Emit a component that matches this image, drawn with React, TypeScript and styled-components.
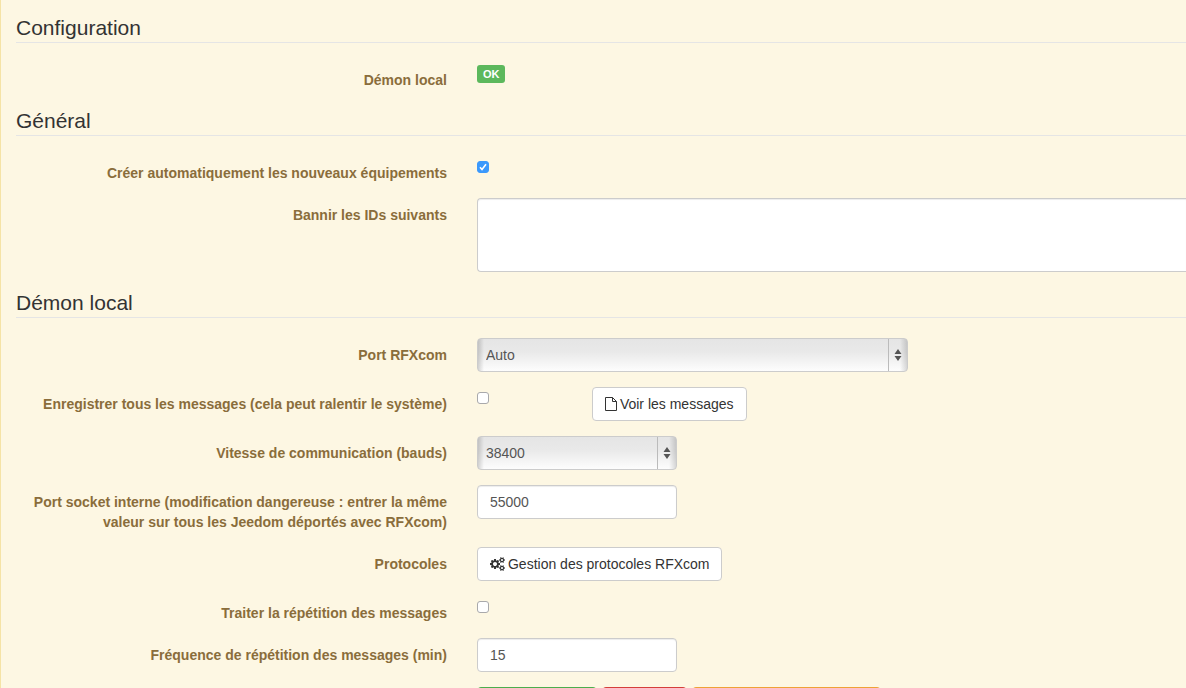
import React from "react";
import styled, { createGlobalStyle, css } from "styled-components";

const GlobalStyle = createGlobalStyle`
  *, *::before, *::after { box-sizing: border-box; }
  html { overflow: hidden; }
  body {
    margin: 0;
    background: #fdf7e3;
    color: #333;
    font-family: "Liberation Sans", Arial, sans-serif;
    font-size: 14px;
    line-height: 20px;
  }
  button, input, select, textarea { font: inherit; }
`;

const Panel = styled.form`
  min-height: 100vh;
  padding-top: 12px;
  border-left: 1px solid #f5e3a6;
  background: #fdf7e3;
`;

const Section = styled.section``;

const Legend = styled.h2`
  margin: 0 0 20px 15px;
  padding-top: 2px;
  border-bottom: 1px solid #e5e5e5;
  font-size: 21px;
  font-weight: 400;
  line-height: 28px;
`;

const Row = styled.div`
  display: flex;
  align-items: flex-start;
  margin-bottom: 15px;
`;

const labelStyle = css`
  flex: 0 0 38.9%;
  padding: 7px 15px 0;
  color: #8a6d3b;
  font-weight: 700;
  text-align: right;
`;

const Label = styled.label`
  ${labelStyle}
`;

const Caption = styled.span`
  ${labelStyle}
`;

const Column = styled.div<{ $width?: string; $flush?: boolean }>`
  flex: ${(p) => (p.$width ? `0 0 ${p.$width}` : "1 0 0")};
  min-width: 0;
  padding: ${(p) => (p.$flush ? "0 0 0 15px" : "0 15px")};
`;

const Badge = styled.span`
  display: block;
  width: fit-content;
  margin-top: 2px;
  padding: 2px 6px;
  border-radius: 3px;
  background: #5cb85c;
  color: #fff;
  font-size: 11px;
  font-weight: 700;
  line-height: 14px;
`;

const field = css`
  display: block;
  width: 100%;
  border: 1px solid #ccc;
  border-radius: 4px;
  color: #555;
`;

const TextInput = styled.input`
  ${field}
  height: 34px;
  padding: 6px 12px;
  background: #fff;
  box-shadow: inset 0 1px 1px rgba(0, 0, 0, 0.075);
`;

const TextArea = styled.textarea`
  ${field}
  height: 74px;
  padding: 6px 12px;
  border-right: 0;
  border-radius: 4px 0 0 4px;
  background: #fff;
  box-shadow: inset 0 1px 1px rgba(0, 0, 0, 0.075);
  resize: none;
`;

const SelectBox = styled.div`
  position: relative;
`;

const Select = styled.select`
  ${field}
  height: 34px;
  padding: 0 28px 0 8px;
  appearance: none;
  background:
    linear-gradient(to right, rgba(0, 0, 0, 0.16), transparent) left / 6px 100% no-repeat,
    linear-gradient(to left, rgba(0, 0, 0, 0.14), transparent) right / 7px 100% no-repeat,
    linear-gradient(#e5e5e5, #e9e9e9 40%, #fdfdfd);
`;

const SelectArrows = styled.svg`
  position: absolute;
  top: 1px;
  right: 0;
  pointer-events: none;
`;

const CheckboxBox = styled.div`
  display: grid;
  width: fit-content;
  padding-top: 5px;
`;

const Checkbox = styled.input`
  grid-area: 1 / 1;
  width: 12px;
  height: 12px;
  margin: 0;
  appearance: none;
  border: 1px solid #a9a9ab;
  border-radius: 3px;
  background: #fff;

  &:checked {
    border-color: #3b99fc;
    background: #3b99fc;
  }

  &:checked + svg {
    visibility: visible;
  }
`;

const Tick = styled.svg`
  grid-area: 1 / 1;
  z-index: 1;
  visibility: hidden;
  pointer-events: none;
`;

const Button = styled.button`
  display: inline-flex;
  align-items: center;
  gap: 3px;
  height: 34px;
  padding: 0 12px;
  border: 1px solid #ccc;
  border-radius: 4px;
  background: #fff;
  color: #333;
  white-space: nowrap;
`;

const Actions = styled.div`
  display: flex;
  gap: 5px;
  margin-left: 38.9%;
  padding: 0 15px;
`;

const tones = {
  success: { fill: "#5cb85c", edge: "#4cae4c", width: "120px" },
  danger: { fill: "#d9534f", edge: "#d43f3a", width: "85px" },
  warning: { fill: "#f0ad4e", edge: "#eea236", width: "189px" },
};

const ActionButton = styled(Button)<{ $tone: keyof typeof tones }>`
  width: ${(p) => tones[p.$tone].width};
  border-color: ${(p) => tones[p.$tone].edge};
  background: ${(p) => tones[p.$tone].fill};
`;

function Arrows() {
  return (
    <SelectArrows width="20" height="32" viewBox="0 0 20 32" aria-hidden="true">
      <path d="M.5 0v32" stroke="#bbb" />
      <path d="M6.500 15L10 10L13.500 15ZM6.500 17H13.500L10 22Z" fill="#555" />
    </SelectArrows>
  );
}

function FileIcon() {
  return (
    <svg width="12" height="14" viewBox="0 0 12 14" fill="none" stroke="#333" aria-hidden="true">
      <path d="M.5.5H7.500L11.500 4.500V13.500H.5ZM7.500.5V4.500H11.500" />
    </svg>
  );
}

const smallCog =
  "v140q0 16-149 31-12 27-30 52 51 113 51 138 0 4-4 7-122 71-124 71-8 0-46-47t-52-68q-20 2-30 2t-30-2q-14 21-52 68t-46 47q-2 0-124-71-4-3-4-7 0-25 51-138-18-25-30-52-149-15-149-31v-140q0-16 149-31 13-29 30-52-51-113-51-138 0-4 4-7 4-2 35-20t59-34 30-16q8 0 46 46.500t52 67.500q20-2 30-2t30 2q51-71 92-112l6-2q4 0 124 70 4 3 4 7 0 25-51 138 17 23 30 52 149 15 149 31z";

const smallHole =
  "q0-52-38-90t-90-38-90 38-38 90q0 53 37.500 90.500t90.500 37.500 90.500-37.500 37.500-90.500z";

const largeCog =
  "M896 896q0-106-75-181t-181-75-181 75-75 181 75 181 181 75 181-75 75-181zM1280 805v185q0 10-7 19.500t-16 10.500l-155 24q-11 35-32 76 34 48 90 115 7 11 7 20 0 12-7 19-23 30-82.500 89.500t-78.500 59.500q-11 0-21-7l-115-90q-37 19-77 31-11 108-23 155-7 24-30 24h-186q-11 0-20-7.500t-10-17.500l-23-153q-34-10-75-31l-118 89q-7 7-20 7-11 0-21-8-144-133-144-160 0-9 7-19 10-14 41-53t47-61q-23-44-35-82l-152-24q-10-1-17-9.500t-7-19.500v-185q0-10 7-19.500t16-10.500l155-24q11-35 32-76-34-48-90-115-7-11-7-20 0-12 7-20 22-30 82-89t79-59q11 0 21 7l115 90q34-18 77-32 11-108 23-154 7-24 30-24h186q11 0 20 7.500t10 17.500l23 153q34 10 75 31l118-89q8-7 20-7 11 0 21 8 144 133 144 160 0 8-7 19-12 16-42 54t-45 60q23 48 34 82l152 23q10 2 17 10.500t7 19.500z";

function CogsIcon() {
  return (
    <svg width="15" height="14" viewBox="0 0 1920 1792" fill="#333" aria-hidden="true">
      <path d={largeCog} />
      <path fillRule="evenodd" d={`M1920 1338${smallCog}M1664 1408${smallHole}`} />
      <path fillRule="evenodd" d={`M1920 314${smallCog}M1664 384${smallHole}`} />
    </svg>
  );
}

function Check({ id, defaultChecked }: { id: string; defaultChecked?: boolean }) {
  return (
    <CheckboxBox>
      <Checkbox type="checkbox" id={id} defaultChecked={defaultChecked} />
      <Tick width="12" height="12" viewBox="0 0 12 12" aria-hidden="true">
        <path d="M3 6.300L5 8.500L9 3.200" fill="none" stroke="#fff" strokeWidth="1.600" />
      </Tick>
    </CheckboxBox>
  );
}

export default function App() {
  return (
    <>
      <GlobalStyle />
      <Panel onSubmit={(e) => e.preventDefault()}>
        <Section>
          <Legend>Configuration</Legend>
          <Row>
            <Caption>Démon local</Caption>
            <Column><Badge>OK</Badge></Column>
          </Row>
        </Section>

        <Section>
          <Legend>Général</Legend>
          <Row>
            <Label htmlFor="auto-create">Créer automatiquement les nouveaux équipements</Label>
            <Column><Check id="auto-create" defaultChecked /></Column>
          </Row>
          <Row>
            <Label htmlFor="banned">Bannir les IDs suivants</Label>
            <Column $flush><TextArea id="banned" /></Column>
          </Row>
        </Section>

        <Section>
          <Legend>Démon local</Legend>
          <Row>
            <Label htmlFor="port">Port RFXcom</Label>
            <Column $width="38.9%">
              <SelectBox>
                <Select id="port"><option>Auto</option></Select>
                <Arrows />
              </SelectBox>
            </Column>
          </Row>
          <Row>
            <Label htmlFor="log">Enregistrer tous les messages (cela peut ralentir le système)</Label>
            <Column $width="9.7%"><Check id="log" /></Column>
            <Column><Button type="button"><FileIcon />Voir les messages</Button></Column>
          </Row>
          <Row>
            <Label htmlFor="speed">Vitesse de communication (bauds)</Label>
            <Column $width="19.45%">
              <SelectBox>
                <Select id="speed"><option>38400</option></Select>
                <Arrows />
              </SelectBox>
            </Column>
          </Row>
          <Row>
            <Label htmlFor="socket">
              Port socket interne (modification dangereuse : entrer la même valeur sur tous les Jeedom déportés avec RFXcom)
            </Label>
            <Column $width="19.45%"><TextInput id="socket" defaultValue="55000" /></Column>
          </Row>
          <Row>
            <Caption>Protocoles</Caption>
            <Column><Button type="button"><CogsIcon />Gestion des protocoles RFXcom</Button></Column>
          </Row>
          <Row>
            <Label htmlFor="repeat">Traiter la répétition des messages</Label>
            <Column><Check id="repeat" /></Column>
          </Row>
          <Row>
            <Label htmlFor="frequency">Fréquence de répétition des messages (min)</Label>
            <Column $width="19.45%"><TextInput id="frequency" defaultValue="15" /></Column>
          </Row>
          <Actions>
            <ActionButton type="button" $tone="success" />
            <ActionButton type="button" $tone="danger" />
            <ActionButton type="button" $tone="warning" />
          </Actions>
        </Section>
      </Panel>
    </>
  );
}
